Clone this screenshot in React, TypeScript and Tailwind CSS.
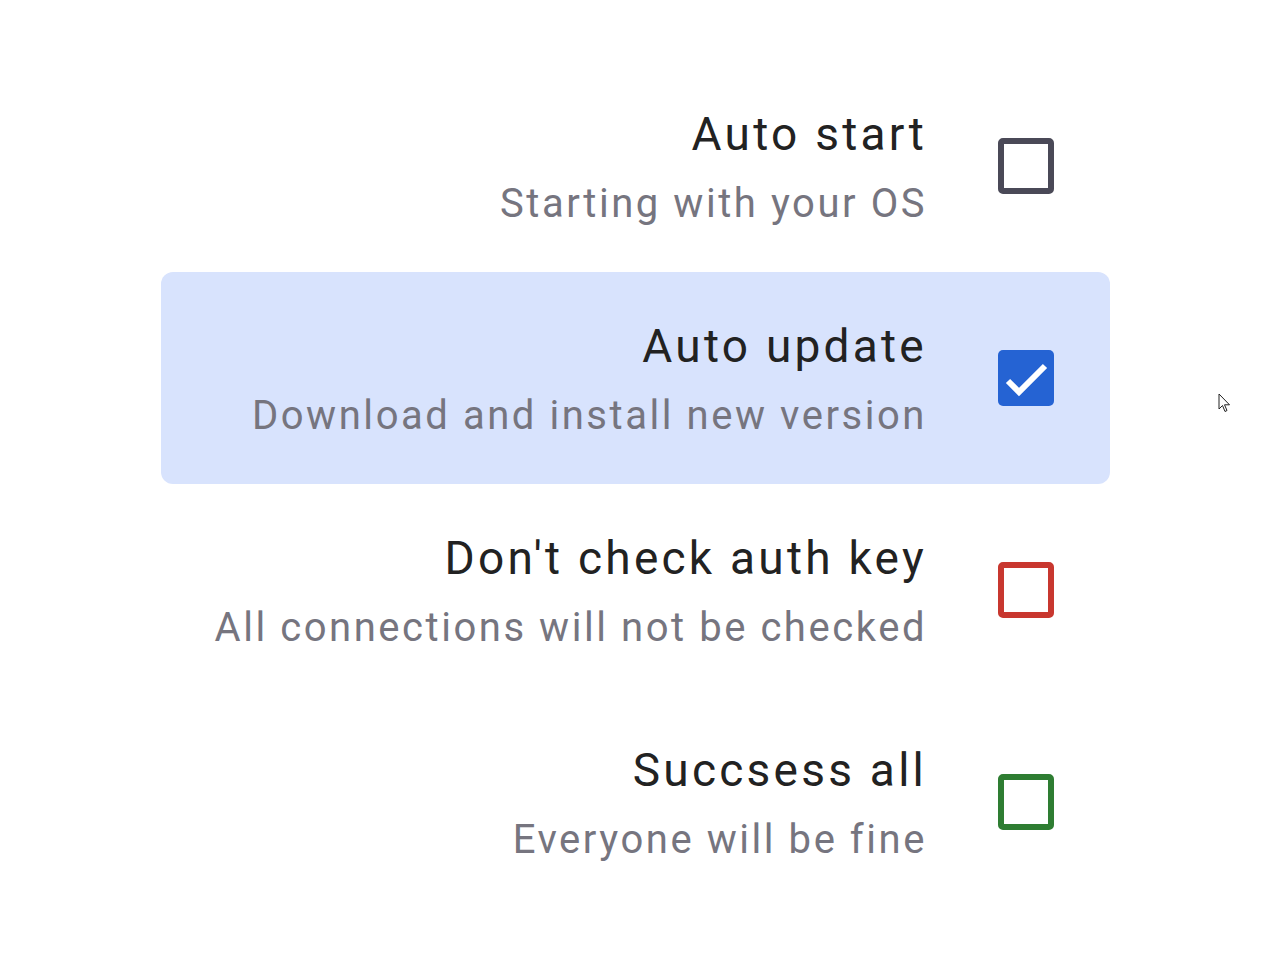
import React from "react";

type Item = { title: string; sub: string; color: string; checked?: boolean; active?: boolean };

const items: Item[] = [
  { title: "Auto start", sub: "Starting with your OS", color: "border-[#4a4957]" },
  { title: "Auto update", sub: "Download and install new version", color: "border-[#2563d3]", checked: true, active: true },
  { title: "Don't check auth key", sub: "All connections will not be checked", color: "border-[#c8372f]" },
  { title: "Succsess all", sub: "Everyone will be fine", color: "border-[#2e7d32]" },
];

export default function App() {
  return (
    <div className="relative w-[1280px] h-[960px] bg-white" style={{ fontFamily: "Roboto, 'Noto Sans', sans-serif" }}>
      <div className="flex flex-col ml-[161px] pt-[60px] w-[949px]">
        {items.map((it) => (
          <div
            key={it.title}
            className={`flex items-center justify-end h-[212px] pr-[56px] rounded-[12px] gap-[71px] ${it.active ? "bg-[#d8e3fd]" : ""}`}
          >
            <div className="flex flex-col items-end text-right whitespace-nowrap">
              <div className="text-[46px] leading-[76px] tracking-[3.25px] text-[#222222]">{it.title}</div>
              <div className="text-[40px] leading-[64px] tracking-[2.55px] text-[#76757f]">{it.sub}</div>
            </div>
            <div
              className={`w-[56px] h-[56px] rounded-[5px] shrink-0 ${
                it.checked ? "bg-[#2563d3]" : `border-[6px] ${it.color}`
              }`}
            >
              {it.checked && (
                <svg width="56" height="56" viewBox="0 0 56 56">
                  <path d="M10 31 L21 42 L47 16" fill="none" stroke="white" strokeWidth="6" />
                </svg>
              )}
            </div>
          </div>
        ))}
      </div>
      <svg className="absolute left-[1218px] top-[393px]" width="14" height="22" viewBox="0 0 14 22">
        <path d="M1 1 L1 16 L4.5 12.5 L7 18.5 L9 17.5 L6.5 11.8 L11.5 11.8 Z" fill="white" stroke="#222" strokeWidth="1" strokeLinejoin="round" />
      </svg>
    </div>
  );
}
